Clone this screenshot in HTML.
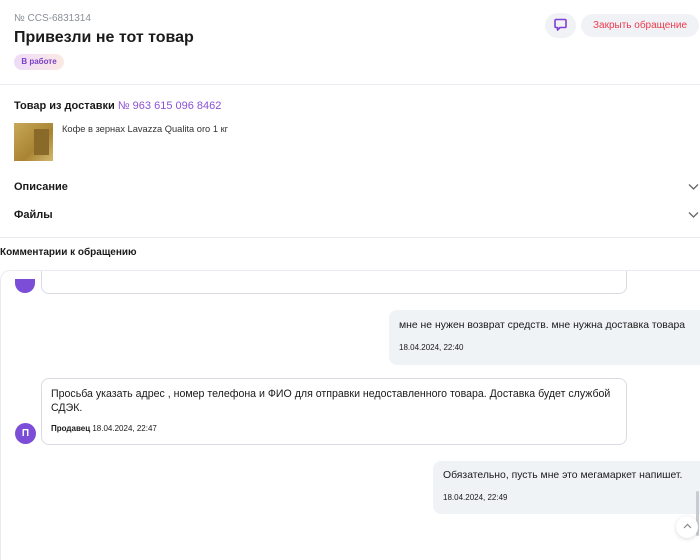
<!DOCTYPE html>
<html><head><meta charset="utf-8"><style>
*{margin:0;padding:0;box-sizing:border-box}
html,body{width:700px;height:560px;overflow:hidden}
body{background:#fff;font-family:"Liberation Sans","DejaVu Sans",sans-serif;color:#1a1a1a;position:relative}
.a{position:absolute}
</style></head><body>
<div class="a" style="left:0;top:0;width:720px;height:85px;border:1px solid #e8ebef;border-top:none;border-left:none"></div>
<div class="a" style="left:14px;top:13px;font-size:10px;color:#8a8f96">№ CCS-6831314</div>
<div class="a" style="left:14px;top:29px;font-size:16px;font-weight:bold">Привезли не тот товар</div>
<div class="a" style="left:14px;top:54px;height:16px;width:50px;border-radius:8px;background:linear-gradient(90deg,#eedcf8,#fbe9e4);font-size:8px;color:#7a3fc8;line-height:16px;text-align:center;font-weight:bold">В работе</div>
<div class="a" style="left:545px;top:13px;width:31px;height:25px;border-radius:13px;background:#f0f2f5"></div>
<svg class="a" style="left:554px;top:18px" width="13" height="14" viewBox="0 0 13 14"><path d="M2 1.5h9a1 1 0 0 1 1 1v6a1 1 0 0 1-1 1H6l-2.5 2.5V9.5H2a1 1 0 0 1-1-1v-6a1 1 0 0 1 1-1z" fill="none" stroke="#7d3fd6" stroke-width="1.6" stroke-linejoin="round"/></svg>
<div class="a" style="left:581px;top:14px;width:118px;height:23px;border-radius:12px;background:#f0f2f5;color:#ec3b4f;font-size:10px;line-height:23px;text-align:center">Закрыть обращение</div>
<div class="a" style="left:0;top:237px;width:700px;border-top:1px solid #e8ebef"></div>
<div class="a" style="left:14px;top:100px;font-size:11px;font-weight:bold">Товар из доставки <span style="color:#8b52d6;font-weight:normal">№ 963 615 096 8462</span></div>
<div class="a" style="left:14px;top:123px;width:39px;height:38px;background:linear-gradient(135deg,#c8a85a,#a88432 60%,#d4b870)"><div style="margin:6px 0 0 20px;width:15px;height:26px;background:#8a6a28"></div></div>
<div class="a" style="left:62px;top:124px;font-size:9.3px;color:#333">Кофе в зернах Lavazza Qualita oro 1 кг</div>
<div class="a" style="left:14px;top:181px;font-size:11px;font-weight:bold">Описание</div>
<div class="a" style="left:14px;top:209px;font-size:11px;font-weight:bold">Файлы</div>
<svg class="a" style="left:688px;top:183px" width="11" height="8"><path d="M1 1.5l4.5 4.5 4.5-4.5" fill="none" stroke="#666" stroke-width="1.3"/></svg>
<svg class="a" style="left:688px;top:211px" width="11" height="8"><path d="M1 1.5l4.5 4.5 4.5-4.5" fill="none" stroke="#666" stroke-width="1.3"/></svg>
<div class="a" style="left:0;top:247px;font-size:10px;font-weight:bold">Комментарии к обращению</div>
<div class="a" style="left:0;top:270px;width:720px;height:290px;border:1px solid #e8ebef;border-bottom:none;border-radius:10px 10px 0 0;overflow:hidden">
 <div class="a" style="left:14px;top:8px;width:20px;height:14px;border-radius:0 0 10px 10px;background:#7c4ed8"></div>
 <div class="a" style="left:40px;top:-10px;width:586px;height:33px;border:1px solid #d8dce2;border-top:none;border-radius:0 0 8px 8px"></div>
 <div class="a" style="left:388px;top:39px;width:320px;height:55px;border-radius:8px;background:#f0f3f6"></div>
 <div class="a" style="left:398px;top:49px;font-size:10.4px;white-space:nowrap">мне не нужен возврат средств. мне нужна доставка товара</div>
 <div class="a" style="left:398px;top:72px;font-size:8px">18.04.2024, 22:40</div>
 <div class="a" style="left:40px;top:107px;width:586px;height:67px;border:1px solid #d8dce2;border-radius:8px"></div>
 <div class="a" style="left:50px;top:116px;width:560px;font-size:10.6px;line-height:14px">Просьба указать адрес , номер телефона и ФИО для отправки недоставленного товара. Доставка будет службой СДЭК.</div>
 <div class="a" style="left:50px;top:153px;font-size:8px"><b>Продавец</b> 18.04.2024, 22:47</div>
 <div class="a" style="left:14px;top:152px;width:21px;height:21px;border-radius:50%;background:#7c4ed8;color:#fff;font-size:10px;font-weight:bold;line-height:21px;text-align:center">П</div>
 <div class="a" style="left:432px;top:190px;width:276px;height:53px;border-radius:8px;background:#f0f3f6"></div>
 <div class="a" style="left:442px;top:199px;font-size:10.4px;white-space:nowrap">Обязательно, пусть мне это мегамаркет напишет.</div>
 <div class="a" style="left:442px;top:222px;font-size:8px">18.04.2024, 22:49</div>
 <div class="a" style="left:695px;top:220px;width:3px;height:45px;background:#c8ccd2;border-radius:2px"></div>
 <div class="a" style="left:675px;top:245px;width:22px;height:22px;border-radius:50%;background:#fff;box-shadow:0 1px 4px rgba(0,0,0,.15)"></div>
 <svg class="a" style="left:682px;top:252px" width="9" height="6"><path d="M1 5l3.5-3.5L8 5" fill="none" stroke="#888" stroke-width="1.2"/></svg>
</div>
</body></html>
